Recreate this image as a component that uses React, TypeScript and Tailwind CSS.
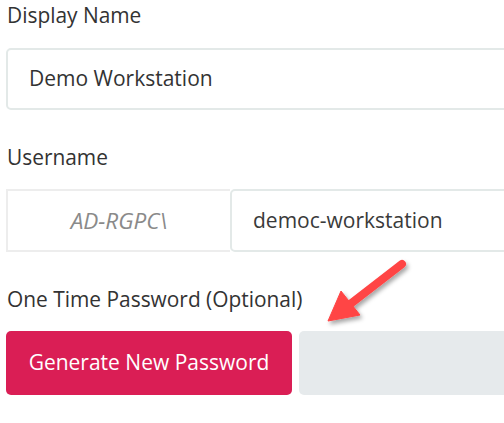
import React from "react";

export default function App() {
  return (
    <div
      className="relative w-[504px] h-[423px] overflow-hidden bg-white text-[#333333]"
      style={{ fontFamily: '"Open Sans", "Noto Sans", sans-serif' }}
    >
      <div className="w-[600px] pl-[6px]">
        <div className="text-[20.9px] leading-[30px] pl-[1px]">Display Name</div>
        <div className="mt-[18px] h-[62px] flex items-center rounded-[5px] border-2 border-[#e3e9e8] pl-[21px] text-[21px]">
          Demo Workstation
        </div>

        <div className="mt-[32px] text-[20.9px] leading-[30px] pl-[1px]">Username</div>
        <div className="mt-[17px] h-[63px] flex">
          <div className="w-[224px] flex items-center justify-center border-2 border-r-0 border-[#ededed] bg-white text-[22.5px] italic text-[#8a8a8a]">
            AD-RGPC\
          </div>
          <div className="flex-1 flex items-center rounded-[5px] border-2 border-[#e3e9e8] pl-[21px] text-[21px] text-[#3a3a3a]">
            democ-workstation
          </div>
        </div>

        <div className="mt-[32px] text-[20.9px] leading-[30px] pl-[1px]">One Time Password (Optional)</div>
        <div className="mt-[17px] h-[64px] flex gap-[7px]">
          <button className="w-[286px] rounded-[5px] bg-[#da1e55] text-white text-[21px] flex items-center justify-center">
            Generate New Password
          </button>
          <div className="flex-1 rounded-[5px] bg-[#e6eaec]" />
        </div>
      </div>

      <svg
        className="absolute left-0 top-0 pointer-events-none"
        width="504"
        height="423"
        viewBox="0 0 504 423"
      >
        <defs>
          <filter id="sh" x="-20%" y="-20%" width="150%" height="150%">
            <feDropShadow dx="2" dy="3" stdDeviation="2" floodColor="#000" floodOpacity="0.35" />
          </filter>
        </defs>
        <g filter="url(#sh)" fill="#ff4545" stroke="#ff4545">
          <line x1="402" y1="264" x2="349" y2="305" strokeWidth="8" strokeLinecap="round" />
          <polygon points="328,321 341,291 360,315" strokeWidth="1" strokeLinejoin="round" />
        </g>
      </svg>
    </div>
  );
}
